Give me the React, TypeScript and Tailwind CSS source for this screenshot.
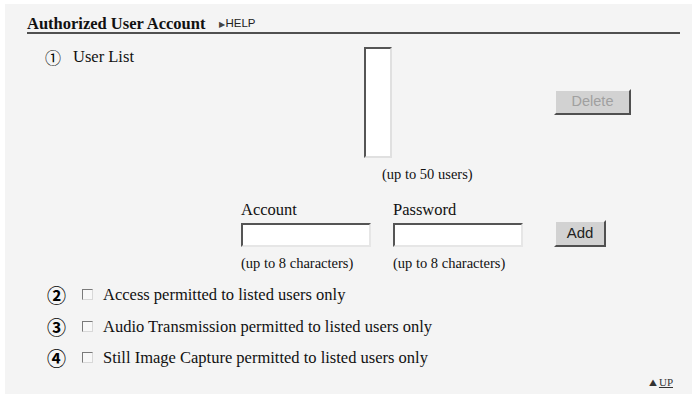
import React from "react";

const serif = "[font-family:Liberation_Serif,Times_New_Roman,serif]";
const circled = "[font-family:Noto_Sans_CJK_JP,DejaVu_Sans,sans-serif]";
const sans = "[font-family:Liberation_Sans,Arial,sans-serif]";

function Check({ label }: { label: string }) {
  return (
    <div className="flex items-center">
      <span className="ml-[16px] inline-block w-[11px] h-[11px] bg-[#f8f8f8] border border-t-[#7a7a7a] border-l-[#7a7a7a] border-b-[#d8d8d8] border-r-[#d8d8d8]" />
      <span className="ml-[10px]">{label}</span>
    </div>
  );
}

function TextBox() {
  return (
    <div className="w-[130px] h-[24px] bg-white border-2 border-t-[#555] border-l-[#555] border-b-[#e6e6e6] border-r-[#e6e6e6]" />
  );
}

export default function App() {
  const options = [
    { n: "②", label: "Access permitted to listed users only" },
    { n: "③", label: "Audio Transmission permitted to listed users only" },
    { n: "④", label: "Still Image Capture permitted to listed users only" },
  ];

  return (
    <div className="w-[692px] h-[394px] bg-white pt-[4px] pl-[5px]">
      <div className={`h-full bg-[#f4f4f4] pl-[22px] pr-[12px] ${serif} text-[16.5px] text-[#111]`}>
        {/* Title */}
        <div className="pt-[11px] border-b-2 border-[#505050] flex items-end">
          <span className="font-bold leading-[17px]">Authorized User Account</span>
          <span className={`${sans} ml-[14px] text-[11.5px] leading-[15px] text-[#222]`}>
            <span className="text-[8px] text-[#444]">▶</span>HELP
          </span>
        </div>

        {/* User list */}
        <div className="flex items-start mt-[13px]">
          <div className="w-[319px] ml-[18px] flex items-center h-[19px]">
            <span className={`${circled} text-[16px] leading-none text-black`}>①</span>
            <span className="ml-[12px] leading-[19px]">User List</span>
          </div>
          <div className="w-[28px] h-[111px] bg-white border-2 border-t-[#555] border-l-[#555] border-b-[#e0e0e0] border-r-[#e0e0e0]" />
          <button
            disabled
            className={`${sans} ml-[162px] mt-[42px] w-[77px] h-[26px] text-[14.5px] text-[#a0a0a0] bg-[#d2d2d2] border-2 border-t-[#f4f4f4] border-l-[#f4f4f4] border-b-[#505050] border-r-[#505050]`}
          >
            Delete
          </button>
        </div>
        <div className="ml-[355px] mt-[8px] text-[14.5px] leading-[17px]">(up to 50 users)</div>

        {/* Account / password */}
        <div className="ml-[214px] mt-[17px] flex items-end">
          <div>
            <div className="leading-[19px] mb-[4px]">Account</div>
            <TextBox />
          </div>
          <div className="ml-[22px]">
            <div className="leading-[19px] mb-[4px]">Password</div>
            <TextBox />
          </div>
          <button
            className={`${sans} ml-[31px] w-[52px] h-[27px] text-[15px] text-[#222] bg-[#d2d2d2] border-2 border-t-[#f4f4f4] border-l-[#f4f4f4] border-b-[#505050] border-r-[#505050]`}
          >
            Add
          </button>
        </div>
        <div className="ml-[214px] mt-[8px] flex text-[14.5px] leading-[17px]">
          <span className="w-[152px]">(up to 8 characters)</span>
          <span>(up to 8 characters)</span>
        </div>

        {/* Options */}
        <div className="ml-[20px] mt-[13px] flex flex-col gap-[12.5px]">
          {options.map((o) => (
            <div key={o.n} className="flex items-center h-[19px] leading-[19px]">
              <span className={`${circled} text-[19px] leading-none font-bold text-black`}>{o.n}</span>
              <Check label={o.label} />
            </div>
          ))}
        </div>

        <div className="flex justify-end mt-[9px] pr-[7px]">
          <span className="text-[11px] leading-[13px] text-[#333]">
            <span className={`${circled} text-[8px]`}>▲</span>
            <span className="ml-[2px] underline">UP</span>
          </span>
        </div>
      </div>
    </div>
  );
}
